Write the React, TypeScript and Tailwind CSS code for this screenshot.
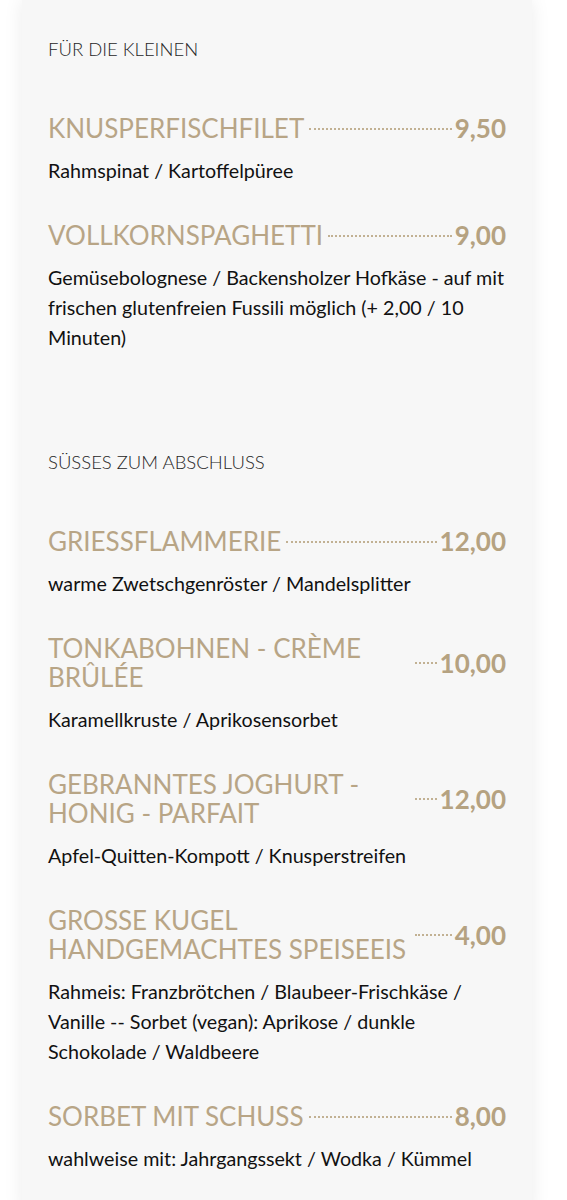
const sections = [
  {
    title: 'FÜR DIE KLEINEN',
    items: [
      { name: 'KNUSPERFISCHFILET', price: '9,50', desc: 'Rahmspinat / Kartoffelpüree' },
      {
        name: 'VOLLKORNSPAGHETTI',
        price: '9,00',
        desc: 'Gemüsebolognese / Backensholzer Hofkäse - auf mit frischen glutenfreien Fussili möglich (+ 2,00 / 10 Minuten)',
      },
    ],
  },
  {
    title: 'SÜSSES ZUM ABSCHLUSS',
    items: [
      { name: 'GRIESSFLAMMERIE', price: '12,00', desc: 'warme Zwetschgenröster / Mandelsplitter' },
      { name: 'TONKABOHNEN - CRÈME BRÛLÉE', price: '10,00', desc: 'Karamellkruste / Aprikosensorbet' },
      { name: 'GEBRANNTES JOGHURT - HONIG - PARFAIT', price: '12,00', desc: 'Apfel-Quitten-Kompott / Knusperstreifen' },
      {
        name: 'GROSSE KUGEL HANDGEMACHTES SPEISEEIS',
        price: '4,00',
        desc: 'Rahmeis: Franzbrötchen / Blaubeer-Frischkäse / Vanille -- Sorbet (vegan): Aprikose / dunkle Schokolade / Waldbeere',
      },
      { name: 'SORBET MIT SCHUSS', price: '8,00', desc: 'wahlweise mit: Jahrgangssekt / Wodka / Kümmel' },
    ],
  },
];

export default function App() {
  return (
    <div className="min-h-[1200px] w-[567px] bg-white font-['Lato',sans-serif]">
      <div className="ml-[22px] w-[510px] min-h-[1200px] bg-[#f7f7f7] px-[26px] pt-[37px] pb-10 shadow-[0_0_18px_rgba(0,0,0,0.08)]">
        {sections.map((section, si) => (
          <section key={section.title} className={si > 0 ? 'mt-[97px]' : ''}>
            <h2 className="text-[18.5px] leading-[24px] font-light text-[#262626]">{section.title}</h2>
            <div className="mt-[53px] flex flex-col gap-[35px]">
              {section.items.map((item) => (
                <div key={item.name}>
                  <div className="flex items-center">
                    <h3 className="max-w-[362px] text-[26px] leading-[29px] text-[#b8a586]">{item.name}</h3>
                    <span className="mr-[3px] ml-[5px] min-w-[20px] flex-1 border-b-2 border-dotted border-[#c2b193]" />
                    <span className="text-[26px] leading-[29px] font-bold text-[#b5a281]">{item.price}</span>
                  </div>
                  <p className="mt-[13px] text-[19.7px] leading-[30px] text-[#111]">{item.desc}</p>
                </div>
              ))}
            </div>
          </section>
        ))}
      </div>
    </div>
  );
}
